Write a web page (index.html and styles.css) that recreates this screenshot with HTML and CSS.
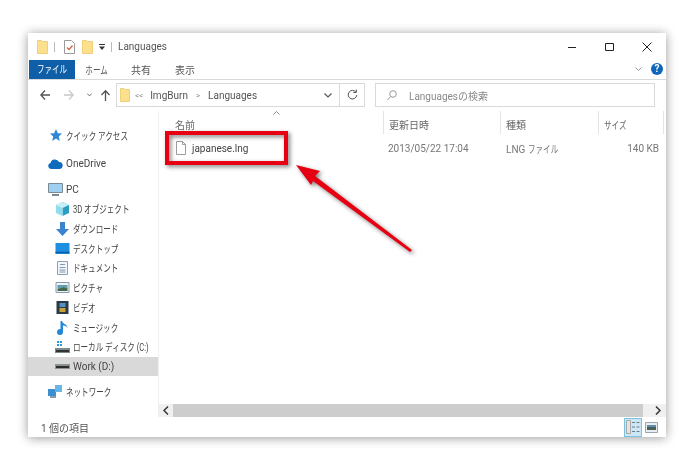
FILE: index.html
```html
<!DOCTYPE html>
<html lang="ja">
<head>
<meta charset="UTF-8">
<meta name="viewport" content="width=device-width, initial-scale=1.0">
<title>Languages</title>
<link rel="stylesheet" href="styles.css">
</head>
<body>

<div id="window">
  <div class="titlebar">
    <svg width="11" height="14" viewBox="0 0 11 14"><path d="M.5.500h4l1 1h5v12H.5z" fill="#fde08c" stroke="#ecd07c"/></svg>
    <span class="qa-sep"></span>
    <svg width="11" height="14" viewBox="0 0 11 14"><path d="M.5.500h7l3 3v10H.5z" fill="#fff" stroke="#9a9a9a"/><path d="M3 7.500l2 2L8.500 5.500" fill="none" stroke="#d9623a" stroke-width="1.200"/></svg>
    <svg class="qa-folder2" width="11" height="14" viewBox="0 0 11 14"><path d="M.5.500h4l1 1h5v12H.5z" fill="#fde08c" stroke="#ecd07c"/></svg>
    <svg class="qa-down" width="6" height="6" viewBox="0 0 6 6"><path d="M0 .5h6" stroke="#333"/><path d="M0 2.500h6L3 6z" fill="#333"/></svg>
    <span class="qa-sep last"></span>
    <span class="title">Languages</span>
    <div class="win-buttons">
      <svg width="10" height="10" viewBox="0 0 10 10"><path d="M0 5.500h8" stroke="#222"/></svg>
      <svg width="10" height="10" viewBox="0 0 10 10"><path d="M.5 1.500h8v7h-8z" fill="none" stroke="#222"/></svg>
      <svg width="10" height="10" viewBox="0 0 10 10"><path d="M.5.500l9 9M9.500.500l-9 9" stroke="#222"/></svg>
    </div>
  </div>

  <div class="ribbon">
    <span class="tab file"><span class="kana mid">ファイル</span></span>
    <span class="tab"><span class="kana mid">ホーム</span></span>
    <span class="tab">共有</span>
    <span class="tab">表示</span>
    <svg class="ribbon-chevron" width="7" height="4" viewBox="0 0 7 4"><path d="M.5.500l3 3 3-3" fill="none" stroke="#9a9a9a"/></svg>
    <span class="help">?</span>
  </div>

  <div class="navbar">
    <svg class="back" width="10" height="10" viewBox="0 0 10 10"><path d="M5 .5L.8 5 5 9.500M.8 5H10" fill="none" stroke="#555" stroke-width="1.300"/></svg>
    <svg class="forward" width="10" height="10" viewBox="0 0 10 10"><path d="M5 .5L9.200 5 5 9.500M9.200 5H0" fill="none" stroke="#c8c8c8" stroke-width="1.300"/></svg>
    <svg class="recent" width="5" height="4" viewBox="0 0 5 4"><path d="M.3.500l2.200 2.500L4.700.500" fill="none" stroke="#777"/></svg>
    <svg class="up" width="9" height="11" viewBox="0 0 9 11"><path d="M.5 5l4-4.300 4 4.300M4.500 1v10" fill="none" stroke="#555" stroke-width="1.300"/></svg>
    <div class="address">
      <svg width="10" height="14" viewBox="0 0 10 14"><path d="M.5.500h3.500l1 1h4.500v12H.5z" fill="#fde08c" stroke="#ecd07c"/></svg>
      <span class="crumb-more">&lt;&lt;</span>
      <span>ImgBurn</span>
      <span class="crumb-sep">&gt;</span>
      <span>Languages</span>
      <svg class="addr-down" width="8" height="5" viewBox="0 0 8 5"><path d="M.5.500L4 4 7.500.500" fill="none" stroke="#555" stroke-width="1.200"/></svg>
      <span class="refresh">
        <svg width="11" height="12" viewBox="0 0 11 12"><path d="M9 3.200A4.300 4.300 0 1 0 9.800 6M9.300.5V3.500H6.300" fill="none" stroke="#555"/></svg>
      </span>
    </div>
    <div class="search">
      <svg width="10" height="11" viewBox="0 0 10 11"><circle cx="6" cy="4" r="3.300" fill="none" stroke="#999"/><path d="M3.600 6.500L.5 10" stroke="#999"/></svg>
      <span>Languagesの検索</span>
    </div>
  </div>

  <div class="content">
    <div class="sidebar">
      <div class="item top"><svg width="13" height="13" viewBox="0 0 13 13"><path d="M7 0l1.800 4.300 4.200.3-3.300 2.800 1 4.600L7 9.600 3.200 12l1-4.600L1 4.600l4.200-.3z" fill="#2f86d3"/></svg><span class="kana">クイック アクセス</span></div>
      <div class="item top gap-1"><svg width="15" height="10" viewBox="0 0 15 10"><path d="M3 10a3 3 0 0 1-.5-5.900 4.500 4.500 0 0 1 8.500-1A3.500 3.500 0 0 1 12 10z" fill="#0f6cbd"/></svg><span>OneDrive</span></div>
      <div class="item top gap-2"><svg width="15" height="13" viewBox="0 0 15 13"><path d="M.5.500h14v9H.5z" fill="#9fd0f2" stroke="#7a8a96"/><path d="M4 12h7" stroke="#7a8a96" stroke-width="2"/></svg><span>PC</span></div>
      <div class="item"><svg width="13" height="14" viewBox="0 0 13 14"><path d="M6.500 0L13 3v8l-6.500 3z" fill="#2b9cc4"/><path d="M6.500 0L0 3v8l6.500 3z" fill="#8fdcec"/><path d="M0 3l6.500 3L13 3 6.500 0z" fill="#c6f0f6"/></svg><span class="kana">3D オブジェクト</span></div>
      <div class="item"><svg width="13" height="14" viewBox="0 0 13 14"><path d="M4 0h5v7h4l-6.500 7L0 7h4z" fill="#3b82cf"/></svg><span class="kana">ダウンロード</span></div>
      <div class="item"><svg width="14" height="11" viewBox="0 0 14 11"><path d="M0 0h14v11H0z" fill="#1e8fe0"/><path d="M0 9.500h14" stroke="#0b5fa8" stroke-width="1.500"/></svg><span class="kana">デスクトップ</span></div>
      <div class="item"><svg width="11" height="14" viewBox="0 0 11 14"><path d="M.5.500h10v13H.5z" fill="#f2f6fa" stroke="#8fa0ae"/><path d="M3 3.500h5M2.500 6.500h6M2.500 9h6M2.500 11h6" stroke="#7d9bb3"/></svg><span class="kana">ドキュメント</span></div>
      <div class="item"><svg width="14" height="11" viewBox="0 0 14 11"><path d="M.5.500h13v10H.5z" fill="#eef3f6" stroke="#8a9aa5"/><path d="M2 3h10v3L8 5 2 7z" fill="#5f9db5"/><path d="M2 7l6-2 4 1v3H2z" fill="#47674f"/></svg><span class="kana">ピクチャ</span></div>
      <div class="item"><svg width="12" height="13" viewBox="0 0 12 13"><path d="M0 0h12v13H0z" fill="#2d3a44"/><path d="M3 2h6v4H3z" fill="#4f93c4"/><path d="M3 7h6v4H3z" fill="#c9a13d"/></svg><span class="kana">ビデオ</span></div>
      <div class="item"><svg width="12" height="15" viewBox="0 0 12 15"><path d="M4 1h1.500c.5 3 5.500 3 5.500 7-1-2-3-2.500-4.500-2.500V12a3 3 0 1 1-2.500-3z" fill="#2488d8"/></svg><span class="kana">ミュージック</span></div>
      <div class="item"><svg width="15" height="12" viewBox="0 0 15 12"><path d="M2 0h2v2H2zM5 0h2v2H5zM2 3h2v2H2zM5 3h2v2H5z" fill="#2b9cd8"/><path d="M0 7h15v5H0z" fill="#7b8a8e"/><path d="M1 9h13v2H1z" fill="#333"/></svg><span class="kana">ローカル ディスク (C:)</span></div>
      <div class="item selected"><svg width="15" height="5" viewBox="0 0 15 5"><path d="M0 0h15v5H0z" fill="#8a9396"/><path d="M1 2h13v2H1z" fill="#2c2c2c"/></svg><span>Work (D:)</span></div>
      <div class="item top gap-3"><svg width="15" height="14" viewBox="0 0 15 14"><path d="M0 5h8v7H0z" fill="#3c8fd0"/><path d="M7 1h7v7H7z" fill="#68b5e8"/><path d="M2 12h6v2H2z" fill="#8a9aa5"/></svg><span class="kana">ネットワーク</span></div>
    </div>

    <div class="main">
      <div class="columns">
        <span class="col name">名前<svg class="sort" width="7" height="4" viewBox="0 0 7 4"><path d="M.5 3.500l3-3 3 3" fill="none" stroke="#8a8a8a"/></svg></span>
        <span class="col date">更新日時</span>
        <span class="col type">種類</span>
        <span class="col size"><span class="kana">サイズ</span></span>
      </div>
      <div class="row">
        <span class="cell name"><svg width="10" height="14" viewBox="0 0 10 14"><path d="M.5.500h6l3 3v10H.5z" fill="#fff" stroke="#9c9c9c"/><path d="M6.500.5v3h3" fill="none" stroke="#9c9c9c"/></svg>japanese.lng</span>
        <span class="cell date">2013/05/22 17:04</span>
        <span class="cell type">LNG <span class="kana">ファイル</span></span>
        <span class="cell size">140 KB</span>
      </div>
      <div class="spacer"></div>
      <div class="hscroll">
        <svg width="6" height="9" viewBox="0 0 6 9"><path d="M5 .5l-4 4 4 4" fill="none" stroke="#333" stroke-width="1.500"/></svg>
        <span class="thumb"></span>
        <svg width="6" height="9" viewBox="0 0 6 9"><path d="M1 .5l4 4-4 4" fill="none" stroke="#333" stroke-width="1.500"/></svg>
      </div>
    </div>
  </div>

  <div class="statusbar">
    <span>1 個の項目</span>
    <div class="views">
      <span class="view active"><svg width="14" height="14" viewBox="0 0 14 14"><path d="M.5.500h4v13h-4z" fill="#e4e4e4" stroke="#a8a8a8"/><path d="M6 2.500h3M10.500 2.500h3M6 7h3M10.500 7h3M6 11.500h3M10.500 11.500h3" stroke="#6f7f8a"/></svg></span>
      <span class="view"><svg width="13" height="11" viewBox="0 0 13 11"><path d="M.5.500h12v10H.5z" fill="#e9eef2" stroke="#9aa5ad"/><path d="M2 3h9v2H2z" fill="#5f8fa8"/><path d="M2 5h9v3H2z" fill="#4a5f55"/></svg></span>
    </div>
  </div>

  <!-- red marks drawn over the screenshot -->
  <svg class="annotation" width="400" height="230" viewBox="0 0 400 230">
    <path class="mark" d="M139 100h119v30H139z" fill="none" stroke="#e60012" stroke-width="4"/>
    <path class="mark" d="M268 132l24 6-5 5 97 74-2 2-97-71-2 4z" fill="#e60012"/>
  </svg>
</div>

</body>
</html>
```

FILE: styles.css
```css
html, body {
  height: 100%;
}
body {
  margin: 0;
  background-color: #fff;
  font-family: Roboto, "Noto Sans CJK JP", sans-serif;
  font-size: 10px;
  color: #444;
  overflow: hidden;
}
#window {
  position: relative;
  display: flex;
  flex-direction: column;
  width: 638px;
  height: 404px;
  margin: 33px 0 0 28px;
  background-color: #fff;
  box-shadow: 0 1px 10px rgba(0, 0, 0, 0.4);
  filter: blur(0.3px);
}
/* katakana in the original UI font is much narrower than Noto */
.kana {
  display: inline-block;
  font-size: 10.500px;
  white-space: nowrap;
  transform: scaleX(0.72);
  transform-origin: left center;
}
.kana.mid {
  transform-origin: center;
}
.titlebar {
  display: flex;
  align-items: center;
  height: 26px;
  padding: 1px 0 0 9px;
  box-sizing: border-box;
}
.qa-sep {
  width: 1px;
  height: 10px;
  margin: 0 9px 0 6px;
  background-color: #bbb;
}
.qa-sep.last {
  margin: 0 6px;
}
.qa-folder2 {
  margin-left: 7px;
}
.qa-down {
  margin-left: 6px;
}
.title {
  color: #555;
}
.win-buttons {
  display: flex;
  gap: 27px;
  margin-left: auto;
  margin-right: 14px;
}
.ribbon {
  display: flex;
  align-items: center;
  height: 20px;
  padding-left: 1px;
  border-bottom: 1px solid #dadada;
}
.tab {
  width: 44px;
  text-align: center;
  color: #555;
}
.file {
  width: 46px;
  height: 19px;
  line-height: 19px;
  color: #fff;
  background-color: #0e5fa8;
}
.ribbon-chevron {
  margin-left: auto;
  margin-right: 9px;
}
.help {
  width: 12px;
  height: 12px;
  line-height: 12px;
  margin-right: 3px;
  border-radius: 50%;
  text-align: center;
  font-weight: bold;
  color: #fff;
  background-color: #0e66b8;
}
.navbar {
  display: flex;
  align-items: center;
  height: 24px;
  margin-top: 3px;
  padding-left: 12px;
}
.back {
  margin-right: 14px;
}
.forward {
  margin-right: 13px;
}
.recent {
  margin-right: 9px;
}
.up {
  margin-right: 6px;
}
.address {
  display: flex;
  align-items: center;
  gap: 5px;
  width: 249px;
  height: 24px;
  padding-left: 3px;
  box-sizing: border-box;
  border: 1px solid #d9d9d9;
  color: #555;
}
.crumb-more, .crumb-sep {
  color: #888;
  font-size: 8px;
}
.crumb-more {
  margin-right: 2px;
}
.crumb-sep {
  margin: 0 3px;
}
.addr-down {
  margin-left: auto;
  margin-right: 2px;
}
.refresh {
  display: flex;
  align-items: center;
  justify-content: center;
  flex: none;
  width: 24px;
  height: 100%;
  border-left: 1px solid #d9d9d9;
}
.search {
  display: flex;
  align-items: center;
  gap: 12px;
  width: 280px;
  height: 24px;
  margin-left: 10px;
  padding-left: 11px;
  box-sizing: border-box;
  border: 1px solid #d9d9d9;
  color: #888;
}
.content {
  flex: 1;
  display: flex;
  min-height: 0;
  margin-top: 4px;
}
.sidebar {
  width: 130px;
  padding-top: 15px;
  border-right: 1px solid #f0f0f0;
}
.item {
  display: flex;
  align-items: center;
  height: 19.700px;
  padding-left: 27px;
  color: #444;
}
.item svg {
  flex: none;
  width: 15px;
  margin-right: 3px;
}
.item.top {
  padding-left: 20px;
}
.item span {
  white-space: nowrap;
}
.gap-1 {
  margin-top: 8px;
}
.gap-2 {
  margin-top: 6px;
}
.gap-3 {
  margin-top: 5px;
}
.selected {
  background-color: #d9d9d9;
}
.main {
  flex: 1;
  display: flex;
  flex-direction: column;
  min-width: 0;
}
.columns, .row {
  display: grid;
  grid-template-columns: 224px 118px 98px 65px;
}
.columns {
  height: 23px;
  color: #666;
}
.col {
  position: relative;
  display: flex;
  align-items: center;
  padding: 3px 0 0 5px;
  border-right: 1px solid #e4e4e4;
}
.col.name {
  padding-left: 16px;
  border-right: 0;
}
.col.date {
  border-left: 1px solid #e4e4e4;
}
.sort {
  position: absolute;
  left: 114px;
  top: 0;
}
.row {
  height: 28px;
  align-items: center;
  color: #777;
}
.cell {
  padding-left: 5px;
  white-space: nowrap;
}
.cell.name {
  display: flex;
  align-items: center;
  gap: 6px;
  padding-left: 17px;
  color: #444;
}
.cell.size {
  text-align: right;
  padding-right: 5px;
}
.spacer {
  flex: 1;
}
.hscroll {
  display: flex;
  align-items: center;
  height: 13px;
  background-color: #f0f0f0;
}
.hscroll svg:first-child {
  margin: 0 4px;
}
.hscroll svg:last-child {
  margin: 0 5px 0 auto;
}
.thumb {
  width: 470px;
  height: 13px;
  background-color: #cdcdcd;
}
.statusbar {
  display: flex;
  align-items: center;
  height: 20px;
  padding-left: 13px;
  color: #555;
}
.views {
  display: flex;
  align-items: center;
  margin-left: auto;
  margin-right: 6px;
}
.view {
  display: flex;
  align-items: center;
  justify-content: center;
  width: 18px;
  height: 19px;
  box-sizing: border-box;
}
.view.active {
  background-color: #cce8f6;
  border: 1px solid #7cc2df;
}
.annotation {
  position: absolute;
  left: 0;
  top: 0;
  overflow: visible;
  pointer-events: none;
}
.mark {
  filter: drop-shadow(2px 2px 2px rgba(0, 0, 0, 0.5));
}
```
